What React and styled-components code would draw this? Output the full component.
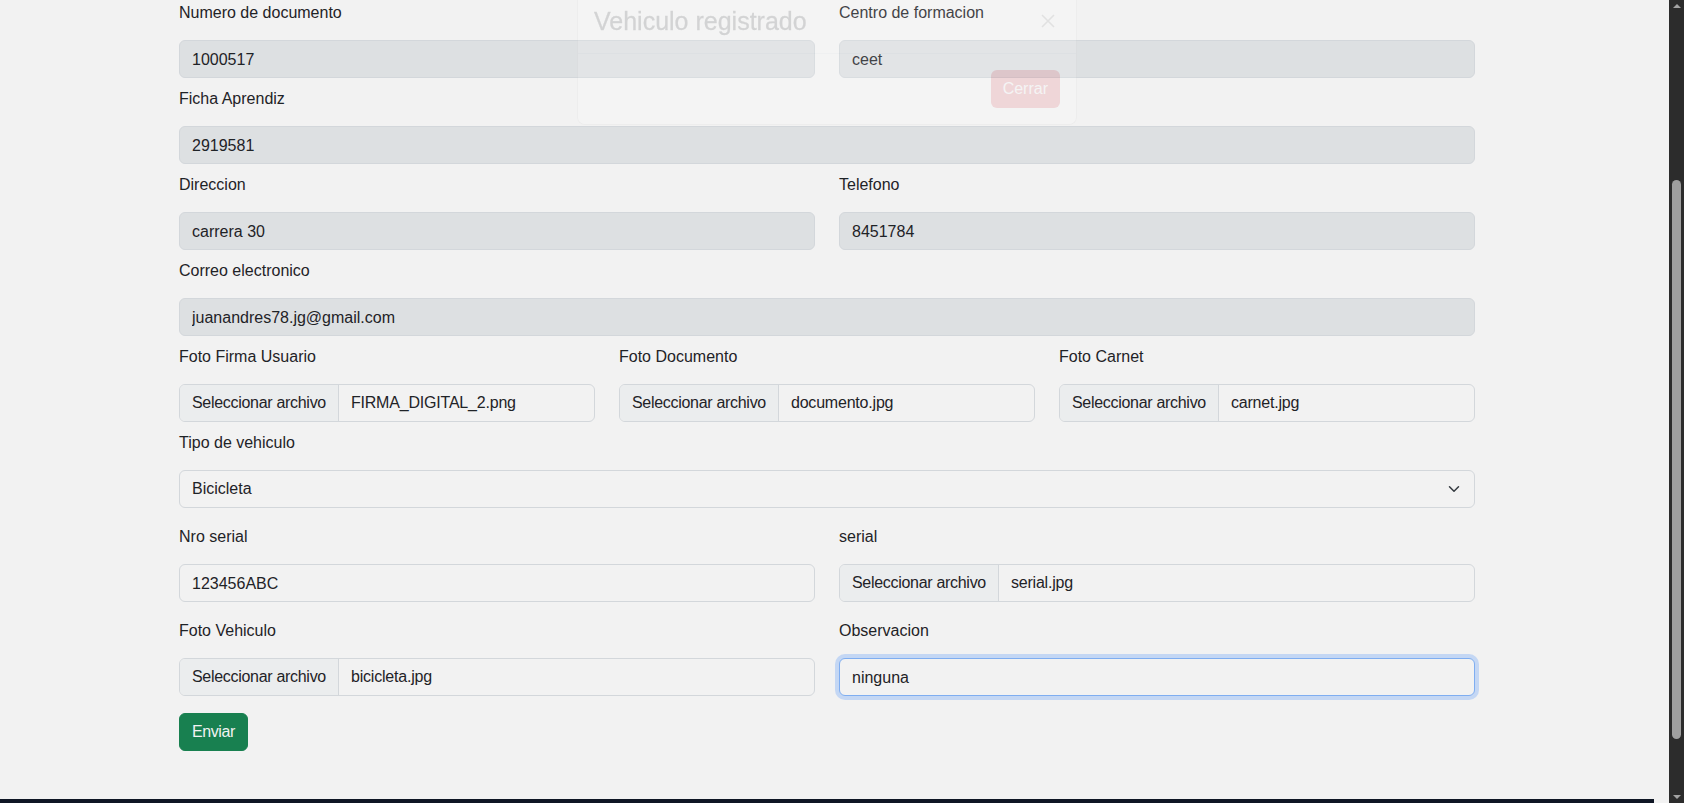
import React from 'react';
import styled, { createGlobalStyle } from 'styled-components';

const GlobalStyle = createGlobalStyle`
  html, body {
    margin: 0;
    padding: 0;
    overflow: hidden;
    background: #f2f2f2;
  }
  * {
    box-sizing: border-box;
  }
`;

const Screen = styled.div`
  display: flex;
  height: 803px;
  overflow: hidden;
  font-family: "Liberation Sans", Arial, sans-serif;
  font-size: 16px;
  color: #1f2327;
`;

const Page = styled.div`
  flex: 1;
  display: flex;
  flex-direction: column;
  padding-right: 15px;
  background: #f2f2f2;
`;

const Container = styled.div`
  position: relative;
  width: 1296px;
  margin: 0 auto;
  padding: 1px 0 48px;
`;

const Row = styled.div`
  display: grid;
  grid-template-columns: repeat(${(p) => p.cols || 1}, 1fr);
  column-gap: 24px;
  margin-bottom: ${(p) => p.gap || 9}px;
`;

const Label = styled.label`
  display: block;
  line-height: 24px;
  margin-bottom: 15px;
`;

const Input = styled.input`
  display: block;
  width: 100%;
  height: 38px;
  padding: 1px 12px 0;
  font: inherit;
  color: #1f2327;
  background: ${(p) => (p.readOnly ? '#dde0e2' : '#f2f2f2')};
  border: 1px solid ${(p) => (p.focused ? '#7faef1' : '#d3d7db')};
  border-radius: 6px;
  box-shadow: ${(p) => (p.focused ? '0 0 0 4px rgba(13, 110, 253, 0.2)' : 'none')};
  outline: none;
`;

const FileBox = styled.div`
  display: flex;
  align-items: stretch;
  height: 38px;
  background: #f2f2f2;
  border: 1px solid #d3d7db;
  border-radius: 6px;
  overflow: hidden;
`;

const FileButton = styled.span`
  display: flex;
  align-items: center;
  padding: 0 12px;
  background: #ebedee;
  border-right: 1px solid #d3d7db;
  white-space: nowrap;
  letter-spacing: -0.3px;
`;

const FileName = styled.span`
  display: flex;
  align-items: center;
  padding: 0 12px;
  letter-spacing: -0.2px;
`;

const SelectBox = styled.div`
  display: flex;
  align-items: center;
  justify-content: space-between;
  height: 38px;
  padding: 0 14px 0 12px;
  background: #f2f2f2;
  border: 1px solid #d3d7db;
  border-radius: 6px;
`;

const SubmitButton = styled.button`
  height: 38px;
  padding: 0 12px;
  font: inherit;
  letter-spacing: -0.4px;
  color: #f2f2f2;
  background: #188050;
  border: 1px solid #188050;
  border-radius: 6px;
`;

const Footer = styled.div`
  height: 40px;
  background: #0f1624;
`;

const Modal = styled.div`
  position: absolute;
  top: -12px;
  left: 398px;
  width: 500px;
  background: #fff;
  border: 1px solid rgba(0, 0, 0, 0.175);
  border-radius: 8px;
  opacity: 0.15;
  color: #212529;
`;

const ModalHeader = styled.div`
  display: flex;
  align-items: center;
  justify-content: space-between;
  padding: 16px;
  border-bottom: 1px solid #dee2e6;
`;

const ModalTitle = styled.h5`
  margin: 0;
  font-size: 25px;
  line-height: 32px;
  font-weight: 400;
  -webkit-text-stroke: 0.3px #212529;
`;

const CloseButton = styled.span`
  display: flex;
  width: 24px;
  height: 24px;
  align-items: center;
  justify-content: center;
`;

const ModalFooter = styled.div`
  display: flex;
  justify-content: flex-end;
  padding: 12px;
`;

const CloseAction = styled.span`
  display: inline-flex;
  align-items: center;
  height: 38px;
  margin: 4px;
  padding: 0 12px;
  color: #fff;
  background: #dc3545;
  border-radius: 6px;
`;

const Scrollbar = styled.div`
  width: 15px;
  display: flex;
  flex-direction: column;
  align-items: center;
  background: #2c2c2c;
`;

const ArrowUp = styled.div`
  margin-top: 4px;
  width: 0;
  height: 0;
  border-left: 4px solid transparent;
  border-right: 4px solid transparent;
  border-bottom: 4px solid #a3a3a3;
`;

const Thumb = styled.div`
  width: 9px;
  height: 559px;
  margin-top: 172px;
  background: #9f9f9f;
  border-radius: 5px;
`;

const ArrowDown = styled.div`
  margin-top: auto;
  margin-bottom: 4px;
  width: 0;
  height: 0;
  border-left: 4px solid transparent;
  border-right: 4px solid transparent;
  border-top: 4px solid #a3a3a3;
`;

const Field = ({ label, children }) => (
  <div>
    <Label>{label}</Label>
    {children}
  </div>
);

const FileField = ({ label, file }) => (
  <Field label={label}>
    <FileBox>
      <FileButton>Seleccionar archivo</FileButton>
      <FileName>{file}</FileName>
    </FileBox>
  </Field>
);

const Chevron = () => (
  <svg width="12" height="12" viewBox="0 0 16 16" fill="none">
    <path d="m2 5 6 6 6-6" stroke="#343a40" strokeWidth="2" strokeLinecap="round" strokeLinejoin="round" />
  </svg>
);

const App = () => {
  return (
    <Screen>
      <GlobalStyle />
      <Page>
        <Container>
          <Row cols={2}>
            <Field label="Numero de documento">
              <Input readOnly defaultValue="1000517" />
            </Field>
            <Field label="Centro de formacion">
              <Input readOnly defaultValue="ceet" />
            </Field>
          </Row>
          <Row>
            <Field label="Ficha Aprendiz">
              <Input readOnly defaultValue="2919581" />
            </Field>
          </Row>
          <Row cols={2}>
            <Field label="Direccion">
              <Input readOnly defaultValue="carrera 30" />
            </Field>
            <Field label="Telefono">
              <Input readOnly defaultValue="8451784" />
            </Field>
          </Row>
          <Row>
            <Field label="Correo electronico">
              <Input readOnly defaultValue="juanandres78.jg@gmail.com" />
            </Field>
          </Row>
          <Row cols={3}>
            <FileField label="Foto Firma Usuario" file="FIRMA_DIGITAL_2.png" />
            <FileField label="Foto Documento" file="documento.jpg" />
            <FileField label="Foto Carnet" file="carnet.jpg" />
          </Row>
          <Row gap={17}>
            <Field label="Tipo de vehiculo">
              <SelectBox>
                <span>Bicicleta</span>
                <Chevron />
              </SelectBox>
            </Field>
          </Row>
          <Row cols={2} gap={17}>
            <Field label="Nro serial">
              <Input defaultValue="123456ABC" />
            </Field>
            <FileField label="serial" file="serial.jpg" />
          </Row>
          <Row cols={2} gap={17}>
            <FileField label="Foto Vehiculo" file="bicicleta.jpg" />
            <Field label="Observacion">
              <Input focused defaultValue="ninguna" />
            </Field>
          </Row>
          <SubmitButton type="button">Enviar</SubmitButton>

          <Modal>
            <ModalHeader>
              <ModalTitle>Vehiculo registrado</ModalTitle>
              <CloseButton>
                <svg width="16" height="16" viewBox="0 0 16 16">
                  <path d="M2 2 14 14M14 2 2 14" stroke="#000" strokeWidth="1.6" opacity="0.5" />
                </svg>
              </CloseButton>
            </ModalHeader>
            <ModalFooter>
              <CloseAction>Cerrar</CloseAction>
            </ModalFooter>
          </Modal>
        </Container>
        <Footer />
      </Page>
      <Scrollbar>
        <ArrowUp />
        <Thumb />
        <ArrowDown />
      </Scrollbar>
    </Screen>
  );
};

export default App;
